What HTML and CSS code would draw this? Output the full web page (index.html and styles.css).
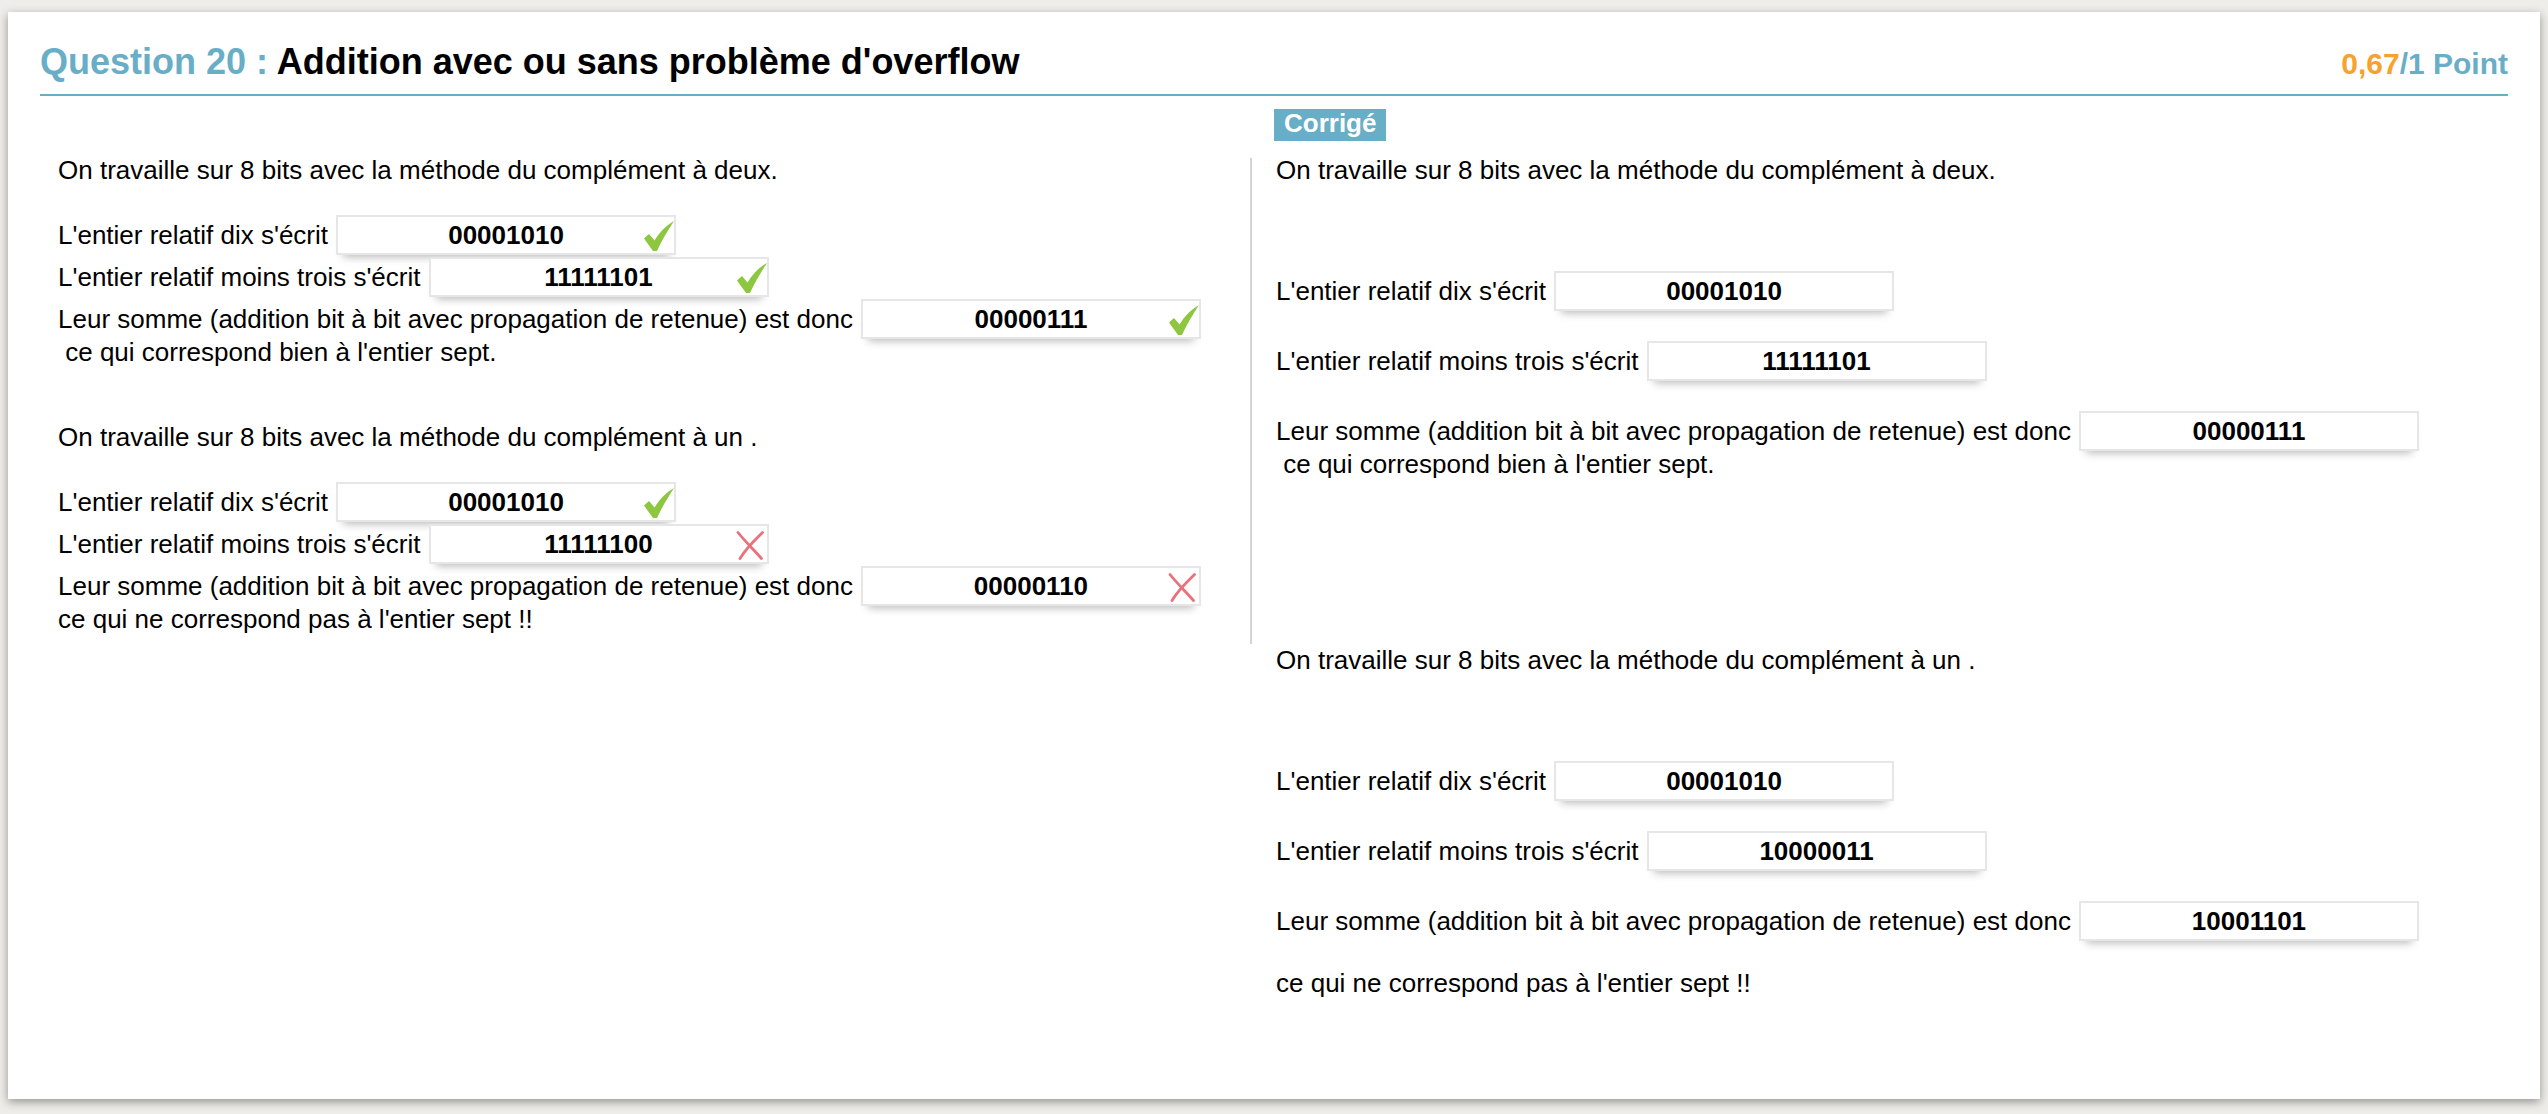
FILE: index.html
```html
<!DOCTYPE html>
<html lang="fr">
<head>
<meta charset="utf-8">
<title>Question 20</title>
<link rel="stylesheet" href="styles.css">
</head>
<body>
<div class="page">
  <div class="card">
    <div class="head">
      <h1 class="title"><span class="qnum">Question 20 :</span> Addition avec ou sans problème d'overflow</h1>
      <div class="score"><span class="got">0,67</span>/1 Point</div>
    </div>
    <div class="body">
      <div class="badge-row"><span class="badge">Corrigé</span></div>

      <div class="col col-user">
        <p class="intro">On travaille sur 8 bits avec la méthode du complément à deux.</p>
        <div class="rows tight">
          <div class="row"><span class="lbl">L'entier relatif dix s'écrit</span><span class="field">00001010<svg class="mark ok" viewBox="0 0 30 30"><path d="M0 17.5 L5 13 L10.5 19.5 C15.5 11 22 4.5 30 0 C24.5 8.5 18 19 13 30 L9 30 Z"/></svg></span></div>
          <div class="row"><span class="lbl">L'entier relatif moins trois s'écrit</span><span class="field">11111101<svg class="mark ok" viewBox="0 0 30 30"><path d="M0 17.5 L5 13 L10.5 19.5 C15.5 11 22 4.5 30 0 C24.5 8.5 18 19 13 30 L9 30 Z"/></svg></span></div>
          <div class="row"><span class="lbl">Leur somme (addition bit à bit avec propagation de retenue) est donc</span><span class="field">00000111<svg class="mark ok" viewBox="0 0 30 30"><path d="M0 17.5 L5 13 L10.5 19.5 C15.5 11 22 4.5 30 0 C24.5 8.5 18 19 13 30 L9 30 Z"/></svg></span></div>
        </div>
        <p class="wrap">&nbsp;ce qui correspond bien à l'entier sept.</p>

        <p class="intro next-l">On travaille sur 8 bits avec la méthode du complément à un .</p>
        <div class="rows tight">
          <div class="row"><span class="lbl">L'entier relatif dix s'écrit</span><span class="field">00001010<svg class="mark ok" viewBox="0 0 30 30"><path d="M0 17.5 L5 13 L10.5 19.5 C15.5 11 22 4.5 30 0 C24.5 8.5 18 19 13 30 L9 30 Z"/></svg></span></div>
          <div class="row"><span class="lbl">L'entier relatif moins trois s'écrit</span><span class="field">11111100<svg class="mark ko" viewBox="0 0 30 30"><path d="M3 2.5 C9 10 17 18 26.5 28.5"/><path d="M27.5 2.5 C21 9 12 17 5 28.5"/></svg></span></div>
          <div class="row"><span class="lbl">Leur somme (addition bit à bit avec propagation de retenue) est donc</span><span class="field">00000110<svg class="mark ko" viewBox="0 0 30 30"><path d="M3 2.5 C9 10 17 18 26.5 28.5"/><path d="M27.5 2.5 C21 9 12 17 5 28.5"/></svg></span></div>
        </div>
        <p class="wrap">ce qui ne correspond pas à l'entier sept !!</p>
      </div>

      <div class="col col-key">
        <p class="intro">On travaille sur 8 bits avec la méthode du complément à deux.</p>
        <div class="rows loose">
          <div class="row"><span class="lbl">L'entier relatif dix s'écrit</span><span class="field">00001010</span></div>
          <div class="row"><span class="lbl">L'entier relatif moins trois s'écrit</span><span class="field">11111101</span></div>
          <div class="row"><span class="lbl">Leur somme (addition bit à bit avec propagation de retenue) est donc</span><span class="field">00000111</span></div>
        </div>
        <p class="wrap">&nbsp;ce qui correspond bien à l'entier sept.</p>

        <p class="intro next-r">On travaille sur 8 bits avec la méthode du complément à un .</p>
        <div class="rows loose">
          <div class="row"><span class="lbl">L'entier relatif dix s'écrit</span><span class="field">00001010</span></div>
          <div class="row"><span class="lbl">L'entier relatif moins trois s'écrit</span><span class="field">10000011</span></div>
          <div class="row"><span class="lbl">Leur somme (addition bit à bit avec propagation de retenue) est donc</span><span class="field">10001101</span></div>
        </div>
        <p class="concl">ce qui ne correspond pas à l'entier sept !!</p>
      </div>
    </div>
  </div>
</div>
</body>
</html>
```

FILE: styles.css
```css
html, body {
  margin: 0;
  padding: 0;
  background: #eeede9;
}

body {
  font-family: "Liberation Sans", Arial, sans-serif;
  color: #000;
}

.page {
  padding: 12px 8px 15px;
}

.card {
  background: #fff;
  min-height: 1087px;
  box-sizing: border-box;
  padding: 28px 32px 0;
  box-shadow: 0 3px 9px rgba(0, 0, 0, 0.38);
}

.head {
  display: flex;
  justify-content: space-between;
  align-items: baseline;
  line-height: 44px;
  padding-bottom: 8px;
  border-bottom: 2px solid #69aec7;
}

.title {
  margin: 0;
  font-size: 36px;
  font-weight: bold;
  color: #000;
}

.qnum {
  color: #69aec7;
}

.score {
  font-size: 30px;
  font-weight: bold;
  color: #69aec7;
}

.got {
  color: #f9a12d;
}

.body {
  display: grid;
  grid-template-columns: 1212px 1fr;
  column-gap: 22px;
  row-gap: 20px;
  padding-top: 10px;
  font-size: 26px;
  line-height: 34px;
}

.badge-row {
  grid-column: 2;
  height: 32px;
}

.badge {
  display: inline-block;
  background: #69aec7;
  color: #fff;
  font-weight: bold;
  line-height: 28px;
  padding: 0 10px 4px;
}

.col-user {
  grid-column: 1;
  align-self: start;
  padding-left: 18px;
  padding-bottom: 8px;
  border-right: 2px solid #d4d4d4;
}

.col-key {
  grid-column: 2;
  padding-left: 2px;
}

p {
  margin: 0;
}

.intro {
  margin-top: -5px;
}

.next-l {
  margin-top: 51px;
}

.next-r {
  margin-top: 162px;
}

.rows.tight {
  margin-top: 28px;
}

.rows.loose {
  margin-top: 84px;
}

.row {
  display: flex;
  align-items: center;
  gap: 8px;
  height: 40px;
}

.tight .row + .row {
  margin-top: 2px;
}

.loose .row + .row {
  margin-top: 30px;
}

.lbl {
  white-space: nowrap;
}

.field {
  position: relative;
  width: 340px;
  height: 40px;
  box-sizing: border-box;
  border: 2px solid #e6e6e6;
  background: #fff;
  box-shadow: 0 9px 8px -7px rgba(0, 0, 0, 0.28);
  display: flex;
  align-items: center;
  justify-content: center;
  font-weight: bold;
  flex: none;
}

.mark {
  position: absolute;
  top: 4px;
  width: 30px;
  height: 30px;
}

.mark.ok {
  right: 0;
}

.mark.ok path {
  fill: #8dc63f;
}

.mark.ko {
  right: 2px;
}

.mark.ko path {
  fill: none;
  stroke: #e8717c;
  stroke-width: 2.8;
  stroke-linecap: round;
}

.wrap {
  margin-top: -4px;
}

.concl {
  margin-top: 25px;
}
```
